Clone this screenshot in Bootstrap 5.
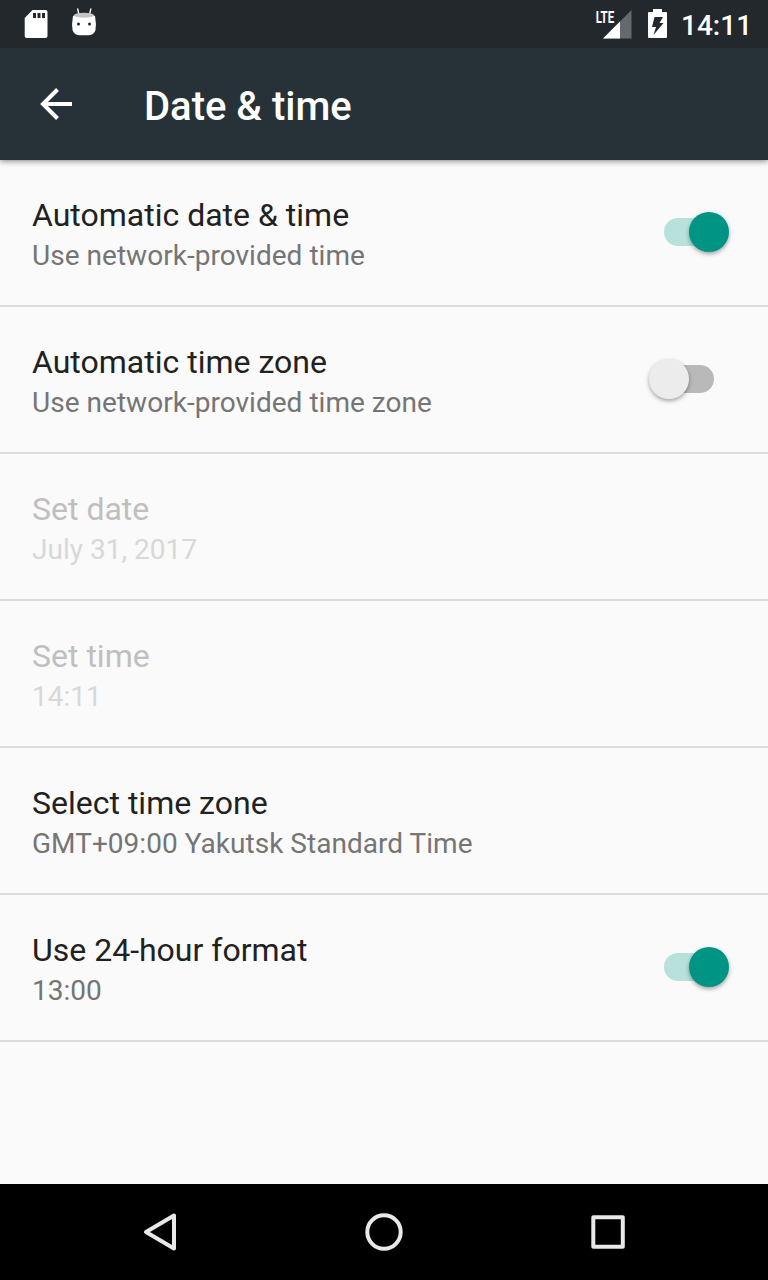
<!DOCTYPE html>
<html lang="en">
<head>
<meta charset="utf-8">
<meta name="viewport" content="width=device-width, initial-scale=1">
<title>Date &amp; time</title>
<link href="https://cdn.jsdelivr.net/npm/bootstrap@5.3.0/dist/css/bootstrap.min.css" rel="stylesheet">
<style>
body{font-family:Roboto,"Noto Sans",sans-serif;background:#fafafa;color:#212121;height:1280px;overflow:hidden}
svg{display:block;flex:none}
.status-bar{height:48px;background:#22282c;color:#fff;z-index:2}
.clock{font-size:28px;font-weight:500;line-height:33px;width:69px;margin:2px 18px 0 13px;white-space:nowrap}
.lte{font:bold 16px Roboto,sans-serif;fill:#fff}
.app-bar{height:112px;background:#263238;box-shadow:0 1px 6px rgba(0,0,0,.5);z-index:1;padding:4px 0 0 32px}
.app-bar h1{font-size:40px;font-weight:500;line-height:47px;margin:0 0 0 64px}
.setting{height:147px;border-bottom:2px solid #dcdcdc;padding:0 39px 0 32px}
.setting-text{padding-top:3px}
.setting-title{font-size:32px;line-height:38px}
.setting-note{font-size:28px;line-height:33px;margin-top:5px;color:#757575;letter-spacing:.03px}
.disabled-row .setting-title{color:#bfbfbf}
.disabled-row .setting-note{color:#d8d8d8}
.toggle{width:65px;height:40px;margin-bottom:2px}
.toggle-track{width:50px;height:28px;border-radius:14px;background:#b8e1dc}
.toggle-thumb{width:40px;height:40px;border-radius:50%;background:#009485;box-shadow:0 2px 4px rgba(0,0,0,.35);margin-left:-25px}
.toggle.off{margin-right:15px}
.toggle.off .toggle-track{background:#b9b9b9;order:2;margin-left:-25px}
.toggle.off .toggle-thumb{background:#ececec;order:1;margin-left:0;position:relative}
.nav-keys{height:96px;background:#000}
</style>
</head>
<body class="d-flex flex-column">
<div class="status-bar d-flex align-items-center flex-shrink-0 position-relative">
  <svg width="110" height="48" viewBox="0 0 110 48">
    <path fill="#fff" fill-rule="evenodd" d="M32.500 10H45.500a2 2 0 0 1 2 2V36a2 2 0 0 1-2 2H26.700a2 2 0 0 1-2-2V18ZM33 13v5h3v-5ZM37.500 13v5h3v-5ZM42 13v5h3v-5Z"/>
    <path d="M77.700 9l1.300 6M90.800 9l-1.300 6" stroke="#fff" stroke-width="1.300" stroke-linecap="round"/>
    <path fill="#fff" d="M73 16q11-6 22 0q1.500 8 .5 14q-1.500 5-6.500 5.200h-10q-5-.2-6.500-5.200q-1-6 .5-14Z"/>
    <ellipse cx="84" cy="15.300" rx="10" ry="2.500" fill="#c4c4c4"/>
    <circle cx="78.500" cy="24" r="1.500" fill="#22282c"/><circle cx="89.500" cy="24" r="1.500" fill="#22282c"/>
  </svg>
  <svg class="ms-auto" width="78" height="48" viewBox="590 0 78 48">
    <path fill="#65696c" d="M631.500 10V38.500H603Z"/>
    <path fill="#fff" d="M620 21.500V38.500H603Z"/>
    <path fill="#22282c" d="M595 8h20v14h2v1h-22Z"/>
    <text class="lte" x="595.700" y="22.500" textLength="18.500" lengthAdjust="spacingAndGlyphs">LTE</text>
    <path fill="#fff" fill-rule="evenodd" d="M653 9h9v3h4q1 0 1 1V37q0 1-1 1H649q-1 0-1-1V13q0-1 1-1h4ZM654.500 17l-2.500 10h4l-2.500 8l10-12h-4l3.500-6Z"/>
  </svg>
  <span class="clock">14:11</span>
</div>
<header class="app-bar d-flex align-items-center flex-shrink-0 text-white position-relative">
  <svg width="48" height="48" viewBox="32 82 48 48"><path d="M72 104H43M57.500 89.500L43 104l14.500 14.500" fill="none" stroke="#fff" stroke-width="4"/></svg>
  <h1>Date &amp; time</h1>
</header>
<main class="flex-grow-1">
  <div class="setting d-flex align-items-center justify-content-between"><div class="setting-text"><div class="setting-title">Automatic date &amp; time</div><div class="setting-note">Use network-provided time</div></div><div class="toggle d-flex align-items-center"><span class="toggle-track flex-shrink-0"></span><span class="toggle-thumb flex-shrink-0"></span></div></div>
  <div class="setting d-flex align-items-center justify-content-between"><div class="setting-text"><div class="setting-title">Automatic time zone</div><div class="setting-note">Use network-provided time zone</div></div><div class="toggle off d-flex align-items-center"><span class="toggle-track flex-shrink-0"></span><span class="toggle-thumb flex-shrink-0"></span></div></div>
  <div class="setting disabled-row d-flex align-items-center"><div class="setting-text"><div class="setting-title">Set date</div><div class="setting-note">July 31, 2017</div></div></div>
  <div class="setting disabled-row d-flex align-items-center"><div class="setting-text"><div class="setting-title">Set time</div><div class="setting-note">14:11</div></div></div>
  <div class="setting d-flex align-items-center"><div class="setting-text"><div class="setting-title">Select time zone</div><div class="setting-note">GMT+09:00 Yakutsk Standard Time</div></div></div>
  <div class="setting d-flex align-items-center justify-content-between"><div class="setting-text"><div class="setting-title">Use 24-hour format</div><div class="setting-note">13:00</div></div><div class="toggle d-flex align-items-center"><span class="toggle-track flex-shrink-0"></span><span class="toggle-thumb flex-shrink-0"></span></div></div>
</main>
<nav class="nav-keys d-flex justify-content-center align-items-center flex-shrink-0" aria-label="System">
  <svg width="768" height="96" viewBox="0 0 768 96" fill="none" stroke="#e9e9e9" stroke-width="4" stroke-linejoin="round">
    <path d="M174 31.500V64.500L146 48Z"/>
    <circle cx="384" cy="48" r="16.700"/>
    <rect x="593.300" y="33.300" width="29.500" height="29.500"/>
  </svg>
</nav>
<script src="https://cdn.jsdelivr.net/npm/bootstrap@5.3.0/dist/js/bootstrap.bundle.min.js"></script>
</body>
</html>
